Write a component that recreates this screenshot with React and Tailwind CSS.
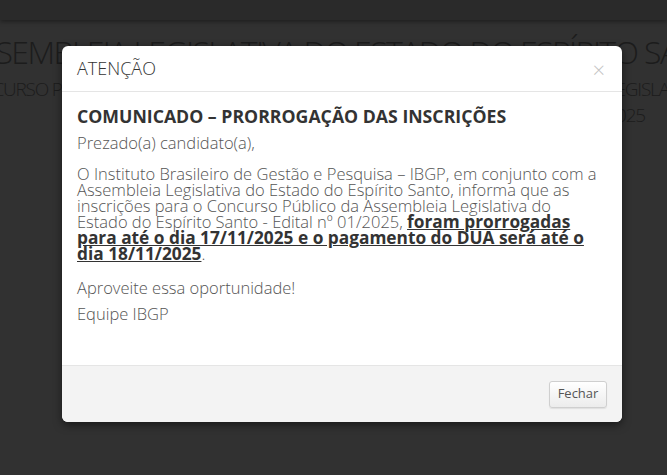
export default function App() {
  return (
    <div className="relative h-[475px] w-[667px] overflow-hidden bg-[#313131] font-['Open_Sans',sans-serif]">
      <div className="h-[20px] bg-[#2a2a2a] shadow-[0_2px_4px_rgba(0,0,0,0.35)]"></div>

      <div className="mt-[12px] ml-[-38px] whitespace-nowrap text-[32px] font-light leading-[40px] tracking-[-1.6px] text-[#1c1c1c]">
        ASSEMBLEIA LEGISLATIVA DO ESTADO DO ESPÍRITO SANTO
      </div>
      <div className="mt-[4px] flex whitespace-nowrap text-[19px] font-light leading-[26px] tracking-[-1.2px] text-[#1c1c1c]">
        <span className="ml-[-44px] w-[651px] shrink-0">CONCURSO PÚBLICO</span>
        <span>LEGISLATIVA DO ESTADO</span>
      </div>
      <div className="flex justify-end pr-[22px] text-[19px] font-light leading-[26px] tracking-[-1.2px] text-[#1c1c1c]">
        EDITAL Nº 01/2025
      </div>

      <div className="absolute left-[62px] top-[46px] flex h-[376px] w-[560px] flex-col rounded-[6px] bg-white shadow-[0_3px_9px_rgba(0,0,0,0.5)]">
        <div className="flex h-[46px] items-center justify-between border-b border-[#e5e5e5] px-[15px]">
          <h4 className="text-[18px] font-light text-[#333]">ATENÇÃO</h4>
          <button className="mr-[2px] text-[22px] font-light leading-none text-[#c4c4c4]">×</button>
        </div>

        <div className="flex-1 px-[15px] pt-[12px] text-[#555]">
          <h3 className="text-[17.7px] font-bold leading-[24px] text-[#333]">
            COMUNICADO – PRORROGAÇÃO DAS INSCRIÇÕES
          </h3>
          <p className="mt-[4px] text-[16.5px] font-light leading-[22px]">Prezado(a) candidato(a),</p>
          <p className="mt-[12px] whitespace-nowrap text-[16.5px] font-light leading-[16px]">
            O Instituto Brasileiro de Gestão e Pesquisa – IBGP, em conjunto com a<br />
            Assembleia Legislativa do Estado do Espírito Santo, informa que as<br />
            inscrições para o Concurso Público da Assembleia Legislativa do<br />
            Estado do Espírito Santo - Edital nº 01/2025,{' '}
            <strong className="text-[17.3px] font-bold leading-[12px] text-[#333] underline">
              foram prorrogadas
              <br />
              para até o dia 17/11/2025 e o pagamento do DUA será até o<br />
              dia 18/11/2025
            </strong>
            .
          </p>
          <p className="mt-[15px] text-[16.5px] font-light leading-[22px]">Aproveite essa oportunidade!</p>
          <p className="mt-[4px] text-[16.5px] font-light leading-[22px]">Equipe IBGP</p>
        </div>

        <div className="flex h-[57px] items-center justify-end rounded-b-[6px] border-t border-[#e5e5e5] bg-[#f3f3f3] px-[15px]">
          <button className="h-[27px] w-[58px] rounded-[3px] border border-[#cfcfcf] bg-gradient-to-b from-white to-[#ececec] text-[13px] text-[#555] shadow-[0_1px_1px_rgba(0,0,0,0.08)]">
            Fechar
          </button>
        </div>
      </div>
    </div>
  )
}
